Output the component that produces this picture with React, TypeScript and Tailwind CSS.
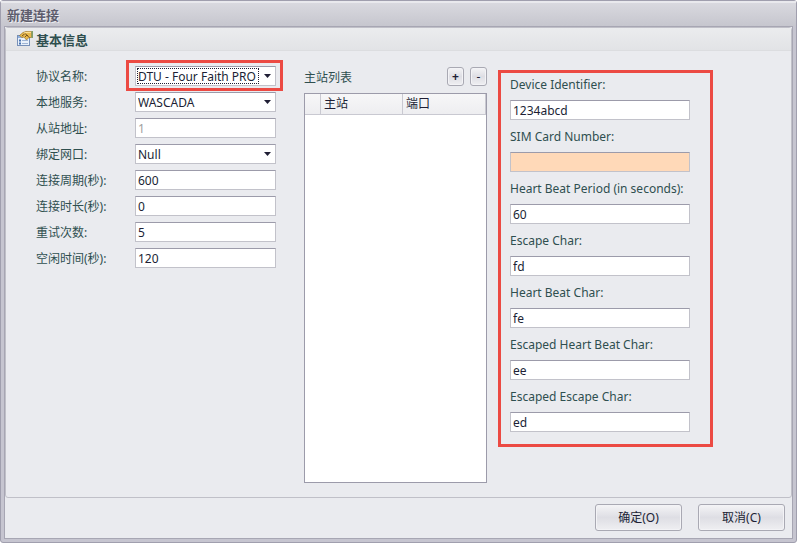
import React, { useId } from "react";

const fieldClass =
  "block h-5 w-full rounded-none border border-[#c2c2ca] border-t-[#9c9baa] px-[2px] text-[12px] leading-[18px] text-[#201f35] outline-none";

function Row({ label, children, id }: { label: string; id: string; children: React.ReactNode }) {
  return (
    <div className="flex h-5 items-center">
      <label htmlFor={id} className="w-[99px] shrink-0 pt-[2px] text-[12px] leading-5 text-[#2f4f4f]">
        {label}
      </label>
      <div className="relative flex-1">{children}</div>
    </div>
  );
}

function SelectRow({ label, value, marked = false }: { label: string; value: string; marked?: boolean }) {
  const id = useId();
  return (
    <Row label={label} id={id}>
      <select id={id} defaultValue={value} className={`${fieldClass} appearance-none bg-white pt-px`}>
        <option>{value}</option>
      </select>
      <svg className="pointer-events-none absolute right-[5px] top-2" width="7" height="4" viewBox="0 0 7 4" aria-hidden="true">
        <path d="M0 0h7L3.500 4z" fill="#201f35" />
      </svg>
      {marked && (
        <>
          <div className="pointer-events-none absolute bottom-[2px] left-[2px] right-[17px] top-[2px] border border-dotted border-[#201f35]" />
          <div className="pointer-events-none absolute -bottom-[5px] -left-[9px] -right-[7px] -top-[6px] border-3 border-[#ec4a43]" />
        </>
      )}
    </Row>
  );
}

function TextRow({ label, value, disabled = false }: { label: string; value: string; disabled?: boolean }) {
  const id = useId();
  return (
    <Row label={label} id={id}>
      <input
        id={id}
        type="text"
        defaultValue={value}
        disabled={disabled}
        className={`${fieldClass} bg-white pt-px disabled:text-[#a0a0a0]`}
      />
    </Row>
  );
}

function StackedField({ label, value, required = false }: { label: string; value: string; required?: boolean }) {
  const id = useId();
  return (
    <div className="flex flex-col gap-[5px]">
      <label htmlFor={id} className="whitespace-nowrap text-[12px] leading-5 text-[#2f4f4f]">
        {label}
      </label>
      <input
        id={id}
        type="text"
        defaultValue={value}
        className={`${fieldClass} pt-px ${required ? "bg-[#ffd9b8]" : "bg-white"}`}
      />
    </div>
  );
}

const buttonClass =
  "flex items-center justify-center rounded-[3px] border border-[#a9a9b3] bg-linear-to-b from-[#f4f4f6] via-[#dedee4] to-[#efeff2] text-[12px] text-[#201f35] shadow-[inset_0_0_0_1px_#f3f3f6]";

function PropertyIcon() {
  return (
    <svg width="17" height="16" viewBox="0 0 17 16" aria-hidden="true">
      <rect x=".5" y="4.500" width="12" height="10" fill="#e9f1fb" stroke="#7790b8" />
      <path d="M1 6h5" stroke="#8fb0dd" strokeWidth="2" />
      <path d="M2 9.500h2M2 12.500h2" stroke="#4772b0" strokeWidth="2" />
      <path d="M5 9.500h6M5 12.500h6" stroke="#9eb4d4" />
      <path d="M2.500 4.500L6 1.500 9 .5h5.500v6L12 6.500 9.500 9 7 6 5 6.500z" fill="#e9b94c" stroke="#9b7428" strokeWidth=".7" />
      <path d="M5 5l3-2.500L11 5M8 6l2-2 2 2.500" fill="none" stroke="#6e4c18" strokeWidth=".9" />
      <path d="M7 2l3-.7h4" fill="none" stroke="#ffe7a0" />
      <path d="M14.500 0H16v7h-1.500z" fill="#7fa06b" />
    </svg>
  );
}

export default function App() {
  return (
    <main className="flex min-h-screen flex-col rounded-[3px] border border-[#a09fae] bg-[#c6c5d0] font-['Noto_Sans','Noto_Sans_CJK_SC',sans-serif]">
      <header className="flex h-[25px] items-center border-t-2 border-[#e9e9ed] bg-linear-to-b from-[#d9d9df] to-[#c6c6ce] px-[6px]">
        <h1 className="text-[13px] font-bold leading-5 text-[#5e5d6d] [text-shadow:1px_1px_0_#ececf0]">新建连接</h1>
      </header>
      <div className="mx-[3px] mb-[3px] flex flex-1 flex-col border border-[#a7a6b3] bg-[#eaebef]">
        <section className="flex flex-1 flex-col rounded-[3px] border border-[#c0c0c8]">
          <div className="flex h-[23px] items-center gap-[2px] border-b border-[#dcdde0] bg-linear-to-b from-[#ebecee] to-[#e2e3e6] pl-[11px]">
            <PropertyIcon />
            <h2 className="pt-px text-[13px] font-bold leading-5 text-[#2f4f4f]">基本信息</h2>
          </div>
          <div className="flex flex-1 pb-[14px] pl-[30px] pr-[78px] pt-[15px]">
            <div className="flex w-60 shrink-0 flex-col gap-[6px]">
              <SelectRow label="协议名称:" value="DTU - Four Faith PRO" marked />
              <SelectRow label="本地服务:" value="WASCADA" />
              <TextRow label="从站地址:" value="1" disabled />
              <SelectRow label="绑定网口:" value="Null" />
              <TextRow label="连接周期(秒):" value="600" />
              <TextRow label="连接时长(秒):" value="0" />
              <TextRow label="重试次数:" value="5" />
              <TextRow label="空闲时间(秒):" value="120" />
            </div>
            <div className="ml-7 flex flex-1 flex-col gap-[6px]">
              <div className="flex h-[21px] items-center gap-[6px]">
                <h3 className="flex-1 pt-[2px] text-[12px] leading-5 text-[#2f4f4f]">主站列表</h3>
                <button type="button" className={`${buttonClass} h-[19px] w-[17px] font-bold`}>+</button>
                <button type="button" className={`${buttonClass} h-[19px] w-[17px]`}>-</button>
              </div>
              <div className="flex-1 border border-[#9c9baa] bg-white">
                <table className="w-full table-fixed border-separate border-spacing-0 text-[12px] text-[#201f35]">
                  <thead>
                    <tr className="h-[21px] bg-linear-to-b from-[#f7f7f8] to-[#ededf0]">
                      <th className="w-4 border-b border-r border-[#c9c9d1] p-0" />
                      <th className="w-[82px] border-b border-r border-[#c9c9d1] px-[3px] py-0 text-left font-normal leading-5">主站</th>
                      <th className="border-b border-r border-[#c9c9d1] px-[3px] py-0 text-left font-normal leading-5">端口</th>
                    </tr>
                  </thead>
                </table>
              </div>
            </div>
            <div className="ml-[11px] mt-1 flex w-[215px] shrink-0 flex-col gap-[7px] self-start border-3 border-[#ec4a43] pb-3 pl-[9px] pr-5 pt-[2px]">
              <StackedField label="Device Identifier:" value="1234abcd" />
              <StackedField label="SIM Card Number:" value="" required />
              <StackedField label="Heart Beat Period (in seconds):" value="60" />
              <StackedField label="Escape Char:" value="fd" />
              <StackedField label="Heart Beat Char:" value="fe" />
              <StackedField label="Escaped Heart Beat Char:" value="ee" />
              <StackedField label="Escaped Escape Char:" value="ed" />
            </div>
          </div>
        </section>
        <footer className="flex justify-end gap-4 pb-[7px] pr-[7px] pt-[6px]">
          <button type="button" className={`${buttonClass} h-[27px] w-[87px]`}>确定(O)</button>
          <button type="button" className={`${buttonClass} h-[27px] w-[87px]`}>取消(C)</button>
        </footer>
      </div>
    </main>
  );
}
